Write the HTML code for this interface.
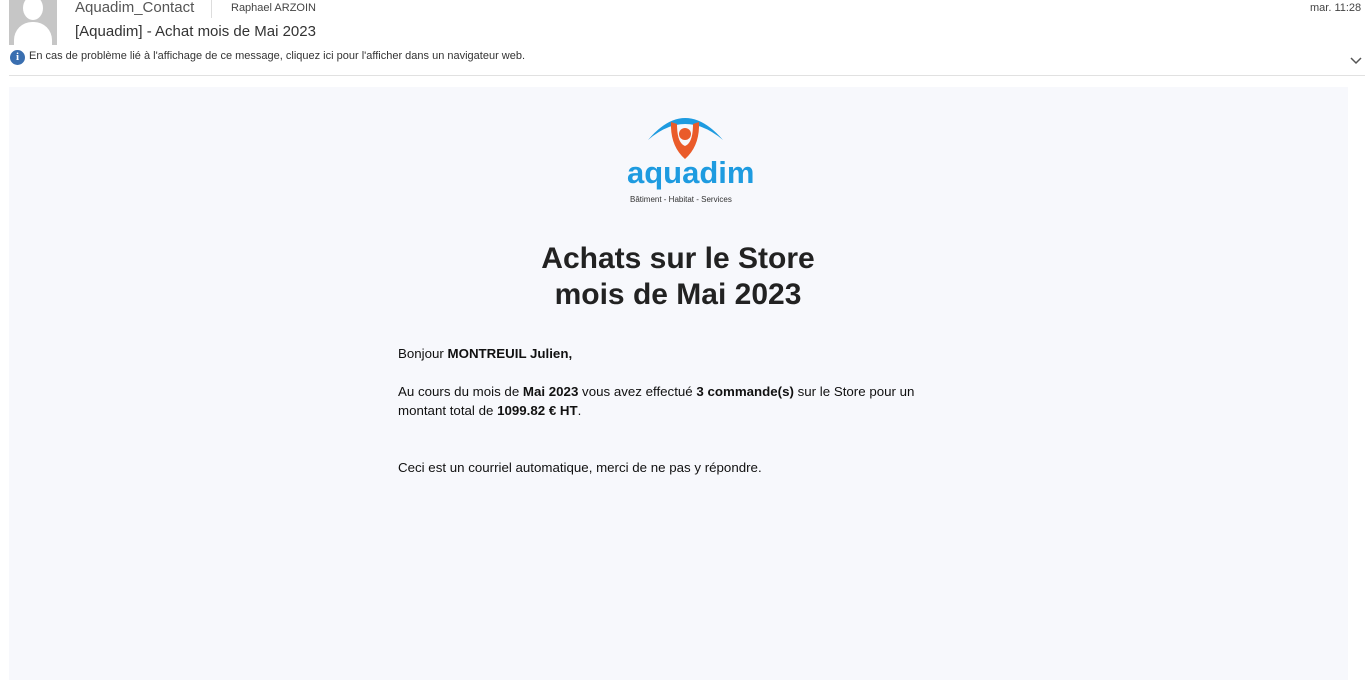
<!DOCTYPE html>
<html><head><meta charset="utf-8"><style>
body{margin:0;width:1372px;height:680px;background:#fff;font-family:"Liberation Sans",sans-serif;overflow:hidden;position:relative}
.abs{position:absolute;white-space:nowrap}
</style></head><body>
<div class="abs" style="left:9px;top:0;width:48px;height:45px;background:#c6c6c6;overflow:hidden">
<div style="position:absolute;left:14px;top:-4px;width:20px;height:24px;border-radius:50%;background:#fff"></div>
<div style="position:absolute;left:5px;top:22px;width:38px;height:30px;border-radius:18px 18px 0 0;background:#fff"></div>
</div>
<div class="abs" style="left:75px;top:-1px;font-size:15px;color:#555">Aquadim_Contact</div>
<div class="abs" style="left:211px;top:0;width:1px;height:18px;background:#ddd"></div>
<div class="abs" style="left:231px;top:2px;font-size:11px;color:#444">Raphael ARZOIN</div>
<div class="abs" style="left:1310px;top:2px;font-size:11px;color:#444">mar. 11:28</div>
<div class="abs" style="left:75px;top:23px;font-size:15px;color:#333">[Aquadim] - Achat mois de Mai 2023</div>
<div class="abs" style="left:10px;top:50px;width:15px;height:15px;border-radius:50%;background:#3a6fb0;color:#fff;font:bold 11px 'Liberation Serif',serif;text-align:center;line-height:15px">i</div>
<div class="abs" style="left:29px;top:50px;font-size:11px;color:#333">En cas de problème lié à l'affichage de ce message, cliquez ici pour l'afficher dans un navigateur web.</div>
<svg class="abs" style="left:1350px;top:57px" width="12" height="8"><path d="M1 1 L6 6 L11 1" stroke="#555" stroke-width="1.5" fill="none"/></svg>
<div class="abs" style="left:9px;top:75px;width:1356px;height:1px;background:#e1e1e1"></div>
<div class="abs" style="left:9px;top:87px;width:1339px;height:593px;background:#f7f8fc"></div>
<svg class="abs" style="left:640px;top:108px" width="90" height="55">
<path d="M8 32 Q45 -12 83 32 Q45 0 8 32Z" fill="#1e9be0"/>
<path d="M31 14 Q30 38 45 51 Q60 38 59 14 L53 16 Q53 35 45 38 Q37 35 37 16Z" fill="#ea5b2a"/>
<circle cx="45" cy="26" r="6" fill="#ea5b2a"/>
</svg>
<div class="abs" style="left:627px;top:155px;font:bold 31px 'Liberation Sans',sans-serif;color:#1e9be0">aquadim</div>
<div class="abs" style="left:630px;top:195px;font-size:8px;color:#333">Bâtiment - Habitat - Services</div>
<div class="abs" style="left:0;width:1356px;top:241px;text-align:center;font:bold 30px/36px 'Liberation Sans',sans-serif;color:#222">Achats sur le Store<br>mois de Mai 2023</div>
<div class="abs" style="left:398px;top:344px;font-size:13.3px;line-height:19px;color:#111">Bonjour <b>MONTREUIL Julien,</b><br><br>Au cours du mois de <b>Mai 2023</b> vous avez effectué <b>3 commande(s)</b> sur le Store pour un<br>montant total de <b>1099.82 € HT</b>.<br><br><br>Ceci est un courriel automatique, merci de ne pas y répondre.</div>
</body></html>
